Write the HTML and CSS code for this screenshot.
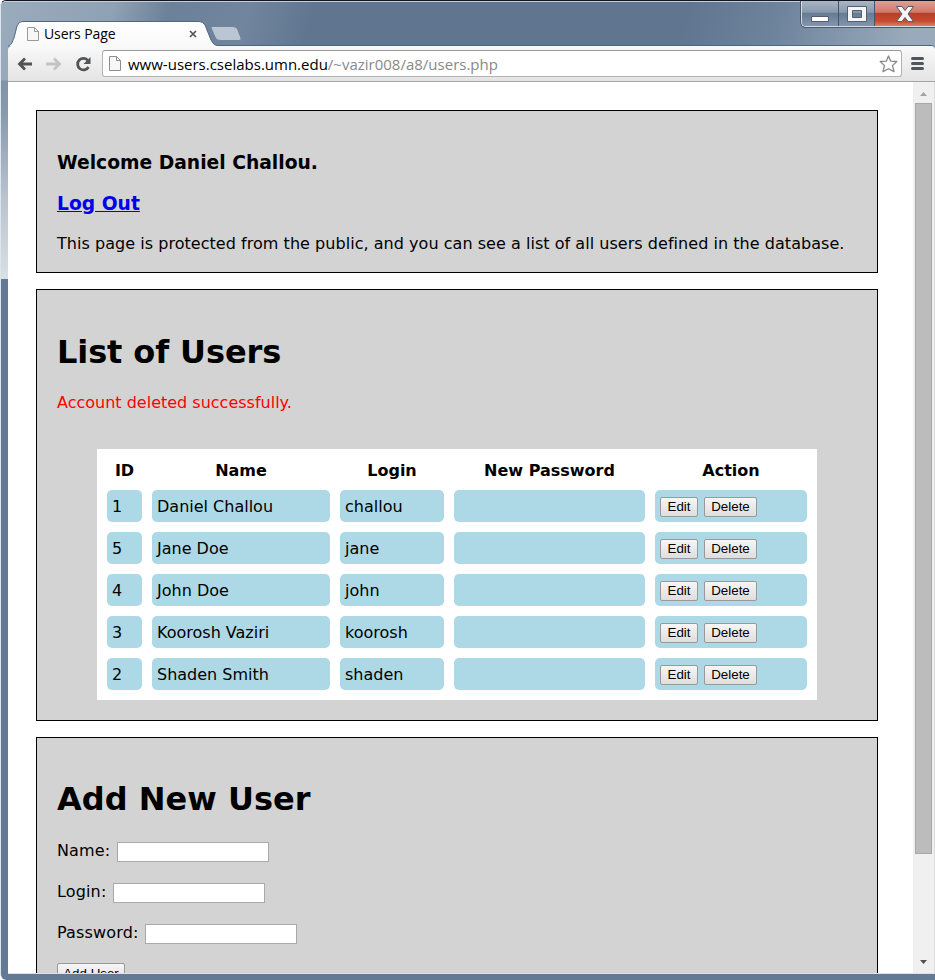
FILE: index.html
```html
<!DOCTYPE html>
<html lang="en">
<head>
<meta charset="utf-8">
<title>Users Page</title>
<link rel="stylesheet" href="styles.css">
</head>
<body>
<div class="window">
  <header class="titlebar">
    <svg class="tabs" width="250" height="25" viewBox="0 0 250 25">
      <defs><linearGradient id="tab" x2="0" y2="1"><stop stop-color="#fff"/><stop offset="1" stop-color="#f9f9f9"/></linearGradient></defs>
      <path d="M0 25C4 24 4 21 6 17L9 5Q11 .5 14 .5H191Q195 .5 197 4L203 19Q205 24 210 25" fill="url(#tab)" stroke="#53677e"/>
      <path d="M204 5.500H225Q228 5.500 229.500 8L233 17Q234 19.500 231 19.500H212Q209 19.500 207.500 17L203.500 8Q202.500 5.500 204 5.500Z" fill="#bac6d1" stroke="#71849b"/>
    </svg>
    <div class="tab-label">
      <svg width="12" height="14" viewBox="0 0 12 14"><path d="M.5.5H7.500L11.500 4.500V13.500H.5ZM7.500.5V4.500H11.500" fill="#f7f7f7" stroke="#999"/></svg>
      <span class="tab-title">Users Page</span>
      <svg width="8" height="8" viewBox="0 0 8 8"><path d="M1 1L7 7M7 1L1 7" stroke="#555" stroke-width="1.700"/></svg>
    </div>
    <div class="controls">
      <div class="control minimize"><svg width="18" height="6" viewBox="0 0 18 6"><path d="M.5.5H17.500V5.500H.5Z" fill="#fff" stroke="#535f70"/></svg></div>
      <div class="control maximize"><svg width="20" height="16" viewBox="0 0 20 16"><path d="M.5.5H19.500V15.500H.5ZM5.500 4.500V11.500H14.500V4.500Z" fill="#f5f5f5" fill-rule="evenodd" stroke="#535f70"/></svg></div>
      <div class="control close"><svg width="18" height="16" viewBox="0 0 18 16"><path d="M.5.500H6L9 4.500L12 .5H17.500L12 8L17.500 15.500H12L9 11.500L6 15.500H.5L6 8Z" fill="#f6f6f6" stroke="#535a68"/></svg></div>
    </div>
  </header>
  <nav class="toolbar">
    <svg class="nav-icons" width="76" height="16" viewBox="0 0 76 16">
      <path d="M15 8H3M8 2.500L2.500 8L8 13.500" fill="none" stroke="#505559" stroke-width="2.800"/>
      <path d="M29 8H42M37 2.500L42.500 8L37 13.500" fill="none" stroke="#c4c4c4" stroke-width="2.800"/>
      <path d="M71 4.500A5.800 5.800 0 1 0 71.500 11" fill="none" stroke="#505559" stroke-width="2.800"/><path d="M73.500 1V8H66.500Z" fill="#505559"/>
    </svg>
    <div class="address">
      <svg width="12" height="15" viewBox="0 0 12 15"><path d="M.5.5H7.500L11.500 4.500V14.500H.5ZM7.500.5V4.500H11.500" fill="#f7f7f7" stroke="#8c8c8c"/></svg>
      <div class="url">www-users.cselabs.umn.edu<span class="path">/~vazir008/a8/users.php</span></div>
      <svg width="19" height="18" viewBox="0 0 19 18"><path d="M9.500 1L11.700 6.200L17.800 6.500L13.500 10.600L15 16.600L9.500 13.700L4 16.600L5.500 10.600L1.200 6.500L7.300 6.200Z" fill="#fff" stroke="#888" stroke-width="1.300" stroke-linejoin="round"/></svg>
    </div>
    <svg width="13" height="13" viewBox="0 0 13 13"><path d="M1.500 1.500H11.500M1.500 6.500H11.500M1.500 11.500H11.500" stroke="#50565d" stroke-width="3" stroke-linecap="round"/></svg>
  </nav>
  <div class="viewport">
    <main class="page">
      <section class="panel welcome">
        <h3>Welcome Daniel Challou.</h3>
        <h3><a href="#">Log Out</a></h3>
        <p class="intro">This page is protected from the public, and you can see a list of all users defined in the database.</p>
      </section>
      <section class="panel users">
        <h1>List of Users</h1>
        <p class="message">Account deleted successfully.</p>
        <table>
          <colgroup><col class="c-id"><col class="c-name"><col class="c-login"><col class="c-password"><col class="c-action"></colgroup>
          <thead><tr><th>ID</th><th>Name</th><th>Login</th><th>New Password</th><th>Action</th></tr></thead>
          <tbody>
            <tr><td>1</td><td>Daniel Challou</td><td>challou</td><td></td><td><div class="actions"><button>Edit</button><button class="wide">Delete</button></div></td></tr>
            <tr><td>5</td><td>Jane Doe</td><td>jane</td><td></td><td><div class="actions"><button>Edit</button><button class="wide">Delete</button></div></td></tr>
            <tr><td>4</td><td>John Doe</td><td>john</td><td></td><td><div class="actions"><button>Edit</button><button class="wide">Delete</button></div></td></tr>
            <tr><td>3</td><td>Koorosh Vaziri</td><td>koorosh</td><td></td><td><div class="actions"><button>Edit</button><button class="wide">Delete</button></div></td></tr>
            <tr><td>2</td><td>Shaden Smith</td><td>shaden</td><td></td><td><div class="actions"><button>Edit</button><button class="wide">Delete</button></div></td></tr>
          </tbody>
        </table>
      </section>
      <section class="panel add">
        <h1>Add New User</h1>
        <form>
          <label><span class="l-name">Name:</span><input type="text"></label>
          <label><span class="l-login">Login:</span><input type="text"></label>
          <label><span class="l-password">Password:</span><input type="password"></label>
          <button class="submit" type="button">Add User</button>
        </form>
      </section>
    </main>
    <aside class="scrollbar">
      <svg width="7" height="4" viewBox="0 0 7 4"><path d="M0 4L3.500 0L7 4Z" fill="#a3a3a3"/></svg>
      <div class="thumb"></div>
      <svg class="down" width="7" height="4" viewBox="0 0 7 4"><path d="M0 0H7L3.500 4Z" fill="#505050"/></svg>
    </aside>
  </div>
</div>
</body>
</html>
```

FILE: styles.css
```css
* { box-sizing: border-box; }
body { margin: 0; font: 16px/19px "DejaVu Sans", sans-serif; color: #000; }
svg { display: block; flex: none; }
.window {
  width: 935px; height: 980px; overflow: hidden;
  display: flex; flex-direction: column;
  padding: 0 0 6px 7px;
  border-top: 1px solid #15151f;
  border-left: 1px solid #dce5ed;
  border-radius: 6px 0 0 6px;
  background:
    linear-gradient(#a0afbf00, #a0afbf00 79px, #8093a9 80px, #8799ad 40%, #b7c2cd 70%, #d9e0e6) 0 0 / 7px 278px no-repeat,
    linear-gradient(105deg, #9aabbc 0, #8fa1b4 12%, #6b8099 18%, #71869e 26%, #60758f 33%, #60758f 72%, #6e849d 82%, #9aaabb 96%) 0 0 / 100% 80px no-repeat,
    #637a94;
}
.titlebar {
  height: 45px; flex: none; display: flex; justify-content: space-between;
  position: relative; margin-left: -7px; box-shadow: inset 0 1px #c3cfdb;
}
.tabs { margin: 20px 0 0 7px; }
.tab-label {
  position: absolute; left: 26px; top: 23px; width: 170px; height: 20px;
  display: flex; align-items: center;
}
.tab-title { margin-left: 5px; flex: 1; font: 14px/20px "Open Sans", sans-serif; letter-spacing: -.1px; }
.controls {
  display: flex; width: 134px; height: 26px; border: 1px solid #d4dde5; border-top: 0; border-right: 0;
  border-radius: 0 0 0 5px; overflow: hidden; box-shadow: 0 0 0 1px #4a596d;
}
.control { display: flex; align-items: center; justify-content: center; width: 37px; }
.minimize, .maximize { background: linear-gradient(#a8b6c5, #8999ad 45%, #667b94 50%, #8295ab); border-right: 1px solid #45566b; }
.minimize { padding-top: 11px; }
.maximize { width: 36px; }
.close { width: 60px; background: linear-gradient(#dfa095, #cf7869 45%, #b73e2b 50%, #c64a2e 80%, #d98069); }
.toolbar {
  height: 36px; flex: none; display: flex; align-items: center; padding: 0 11px 0 9px;
  background: linear-gradient(#f9f9f9, #e4e4e4); border-bottom: 1px solid #a5a5a5;
  border-radius: 4px 4px 0 0; box-shadow: 0 -1px #506680;
}
.nav-icons { margin-right: 9px; }
.address {
  flex: 1; height: 27px; margin-right: 9px; padding: 0 3px 0 6px; display: flex; align-items: center;
  background: #fff; border: 1px solid #b3b3b3; border-top-color: #999; border-radius: 3px;
}
.url { flex: 1; margin-left: 7px; font: 15px/22px "Open Sans", sans-serif; white-space: nowrap; }
.path { color: #888; }
.viewport { flex: 1; min-height: 0; display: flex; background: #fff; overflow: hidden; border-bottom: 1px solid #dce2e8; }
.page { width: 905px; padding: 28px 35px 0 28px; }
.panel { border: 1px solid #000; background: #d3d3d3; padding: 20px; margin-bottom: 16px; }
.welcome { height: 163px; padding-top: 40px; }
.users { height: 432px; padding-top: 21px; }
.add { height: 300px; }
h3 { margin: 0 0 18px; font-size: 18.720px; line-height: 23px; white-space: nowrap; }
a { color: #00e; }
h1 { margin: 22px 0 21px; font-size: 32px; line-height: 39px; letter-spacing: -.1px; white-space: nowrap; }
.add h1 { letter-spacing: 0; }
p { margin: 0; white-space: nowrap; }
.intro { padding-top: 1px; letter-spacing: .04px; }
.message { color: #f00; margin-bottom: 37px; }
table { width: 720px; height: 251px; margin: 0 40px; table-layout: fixed; border-spacing: 10px; background: #fff; }
.c-id { width: 35px; }
.c-name { width: 178px; }
.c-login { width: 104px; }
.c-password { width: 191px; }
.c-action { width: 152px; }
th { height: 21px; padding: 1px 0 0; }
td { height: 32px; padding: 0 5px; background: #add8e6; border-radius: 5px; white-space: nowrap; }
.actions { display: flex; gap: 6px; padding-top: 2px; }
button {
  width: 38px; height: 20px; padding: 0; font: 13.333px/16px "Liberation Sans", sans-serif; color: #000;
  background: linear-gradient(#f6f6f6, #dedede); border: 1px solid #999; border-radius: 2px;
}
.wide { width: 53px; }
form { display: flex; flex-direction: column; gap: 21px; padding-top: 2px; }
label { display: flex; height: 20px; line-height: 19px; white-space: nowrap; }
label span { position: relative; top: -1px; letter-spacing: .15px; }
.l-name { width: 60px; }
.l-login { width: 56px; }
.l-password { width: 88px; }
input { width: 152px; height: 20px; margin: 0; padding: 1px; border: 1px solid #a9a9a9; background: #fff; }
.submit { width: 68px; height: 21px; margin-top: -2px; }
.scrollbar {
  width: 22px; display: flex; flex-direction: column; align-items: center; background: #f0f0f0;
  padding: 10px 1px 9px 0; border-right: 1px solid #ddd;
}
.thumb { width: 17px; height: 751px; margin-top: 7px; border: 1px solid #a8a8a8; background: #bcbcbc; }
.down { margin-top: auto; }
```
